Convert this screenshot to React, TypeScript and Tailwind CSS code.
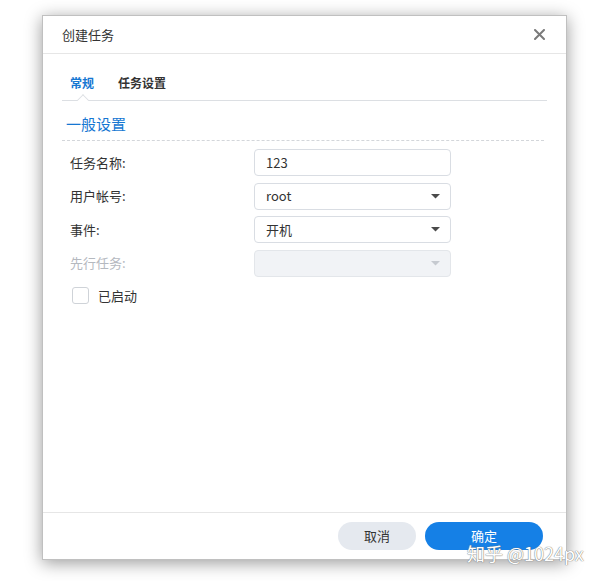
import React from "react";

function Caret({ color = "#555" }: { color?: string }) {
  return (
    <svg width="9" height="5" viewBox="0 0 9 5">
      <path d="M0 0 L9 0 L4.5 4.5 Z" fill={color} />
    </svg>
  );
}

function Field({ value, select, disabled }: { value?: string; select?: boolean; disabled?: boolean }) {
  return (
    <div
      className={`w-[197px] h-[27px] rounded-[4px] border flex items-center justify-between pl-[11px] pr-[10px] ${
        disabled ? "bg-[#f1f3f6] border-[#e3e6ea]" : "bg-white border-[#d9dde3]"
      }`}
    >
      <span className="text-[13px] text-[#333]">{value}</span>
      {select && <Caret color={disabled ? "#c6cad0" : "#4a4a4a"} />}
    </div>
  );
}

function Row({ label, children, disabled }: { label: string; children: React.ReactNode; disabled?: boolean }) {
  return (
    <div className="flex items-center h-[27px]">
      <div className={`w-[192px] pl-[8px] text-[13px] ${disabled ? "text-[#b5b9bf]" : "text-[#333]"}`}>{label}</div>
      {children}
    </div>
  );
}

export default function App() {
  return (
    <div
      className="w-[600px] h-[581px] bg-white relative pt-[15px] pl-[42px]"
      style={{ fontFamily: '"Noto Sans CJK SC", "Noto Sans", sans-serif' }}
    >
      <div className="w-[525px] h-[545px] bg-white flex flex-col shadow-[0_3px_16px_rgba(0,0,0,0.4)] border border-[#c0c0c0]">
        <div className="h-[38px] border-b border-[#e6e6e6] flex items-center justify-between pl-[19px] pr-[21px]">
          <span className="text-[13px] text-[#333]">创建任务</span>
          <svg width="11" height="11" viewBox="0 0 11 11">
            <path d="M1 1 L10 10 M10 1 L1 10" stroke="#7a7a7a" strokeWidth="2" strokeLinecap="round" />
          </svg>
        </div>
        <div className="flex-1 px-[19px]">
          <div className="relative h-[47px] border-b border-[#dcdfe3] flex items-center gap-[24px] pl-[8px] pt-[12px]">
            <span className="text-[12px] font-semibold text-[#1677d2]">常规</span>
            <span className="text-[12px] font-semibold text-[#333]">任务设置</span>
            <div className="absolute left-[15px] bottom-[-1px] w-[12px] h-[7px] overflow-hidden">
              <div className="w-[9px] h-[9px] bg-white border-l border-t border-[#dcdfe3] rotate-45 translate-x-[1.5px] translate-y-[2px]" />
            </div>
          </div>
          <div className="mt-[13px] pl-[4px] text-[15px] text-[#1677d2] leading-[20px]">一般设置</div>
          <div className="mt-[6px] border-b border-dashed border-[#d3d6da] mr-[3px]" />
          <div className="mt-[8px] flex flex-col gap-[6.5px]">
            <Row label="任务名称:">
              <Field value="123" />
            </Row>
            <Row label="用户帐号:">
              <Field value="root" select />
            </Row>
            <Row label="事件:">
              <Field value="开机" select />
            </Row>
            <Row label="先行任务:" disabled>
              <Field select disabled />
            </Row>
          </div>
          <div className="mt-[9px] flex items-center pl-[10px] gap-[9px]">
            <div className="w-[17px] h-[17px] rounded-[3px] border border-[#cfd3d8] bg-white" />
            <span className="text-[13px] text-[#333]">已启动</span>
          </div>
        </div>
        <div className="h-[47px] border-t border-[#e6e6e6] flex items-center justify-end gap-[9px] pr-[23px]">
          <button className="w-[78px] h-[28px] rounded-full bg-[#e5e9ef] text-[13px] text-[#333]">取消</button>
          <button className="w-[118px] h-[28px] rounded-full bg-[#1580e6] text-[13px] text-white">确定</button>
        </div>
      </div>
      <div
        className="absolute left-[467px] top-[540px] text-[18px] text-white leading-[26px]"
        style={{ textShadow: "0 0 1px #777, 0 0 1px #777" }}
      >
        知乎 @1024px
      </div>
    </div>
  );
}
